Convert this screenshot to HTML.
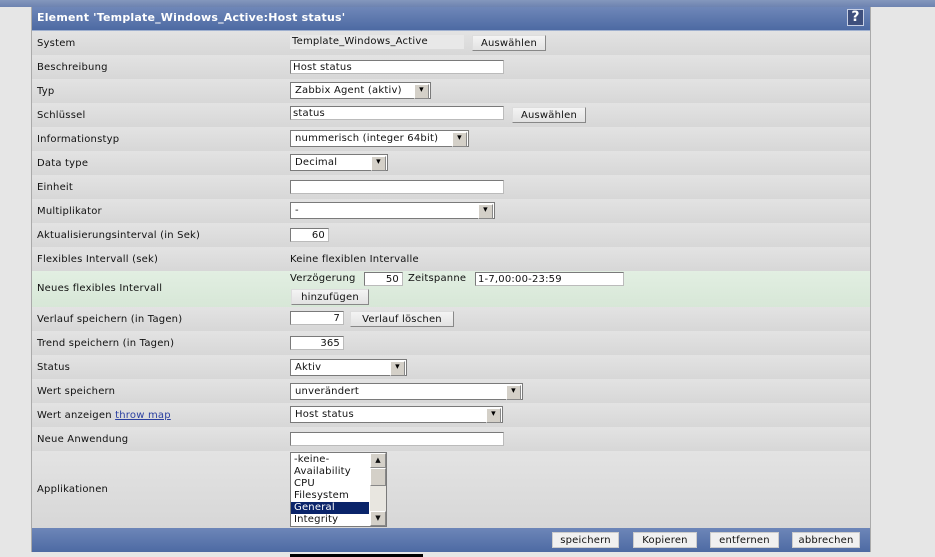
<!DOCTYPE html>
<html><head><meta charset="utf-8"><style>
*{box-sizing:border-box;margin:0;padding:0}
body{width:935px;height:557px;background:#e6e6e6;font-family:"DejaVu Sans","Liberation Sans",sans-serif;font-size:10px;color:#111;position:relative;overflow:hidden;letter-spacing:0.2px}
.top{position:absolute;left:0;top:0;width:935px;height:7px;background:linear-gradient(#8497bd,#6d83b0)}
.wrap{position:absolute;left:31px;top:7px;width:840px;height:545px;border-left:1px solid #aaa;border-right:1px solid #aaa}
.hdr{position:absolute;left:32px;top:7px;width:838px;height:24px;background:linear-gradient(#6f87b8,#4d6aa3);color:#fff;font-weight:bold;font-size:11px;line-height:22px;padding-left:5px;border-bottom:1px solid #9fb0cf}
.help{position:absolute;right:6px;top:2px;width:17px;height:17px;background:#3e4f7d;border:1px solid #c8d0e4;color:#fff;font-size:14px;line-height:15px;text-align:center}
.row{position:absolute;left:32px;width:838px;height:24px;background:linear-gradient(#e3e3e3,#d7d7d7)}
.row .l{position:absolute;left:5px;top:7px;white-space:nowrap}
.g{background:linear-gradient(#e2efe2,#d7e7d7)}
.in{position:absolute;height:14px;background:#fff;border:1px solid #7a7a7a;border-right-color:#bbb;border-bottom-color:#bbb;line-height:13px;padding-left:2px;white-space:nowrap;overflow:hidden}
.r{text-align:right;padding-right:3px}
.sel{position:absolute;height:17px;background:#fff;border:1px solid #7a7a7a;line-height:16px;padding-left:4px;white-space:nowrap}
.sel:after{content:"▾";position:absolute;right:1px;top:1px;width:13px;height:13px;background:#d4d0c8;border:1px solid #888;border-top-color:#fff;border-left-color:#fff;font-size:9px;line-height:11px;text-align:center;color:#000}
.btn{position:absolute;height:16px;background:linear-gradient(#f4f4f4,#e2e2e2);border:1px solid #888;border-top-color:#ddd;border-left-color:#ddd;text-align:center;line-height:15px;white-space:nowrap}
.ft{position:absolute;left:32px;top:528px;width:838px;height:24px;background:linear-gradient(#6d86b8,#4d6aa3)}
.fb{position:absolute;top:4px;height:16px;background:#f0f0f0;border:1px solid #ccc;text-align:center;line-height:15px}
a{color:#2a3fa0;text-decoration:underline}
</style></head><body>
<div class="top"></div>
<div class="wrap"></div>
<div class="hdr">Element 'Template_Windows_Active:Host status'<div class="help">?</div></div>

<div class="row" style="top:31px"><span class="l">System</span>
<div class="in" style="left:258px;top:4px;width:174px;background:#e8e8e8;border:none">Template_Windows_Active</div>
<div class="btn" style="left:440px;top:4px;width:74px">Auswählen</div></div>
<div class="row" style="top:55px"><span class="l">Beschreibung</span><div class="in" style="left:258px;top:5px;width:214px">Host status</div></div>
<div class="row" style="top:79px"><span class="l">Typ</span><div class="sel" style="left:258px;top:3px;width:141px">Zabbix Agent (aktiv)</div></div>
<div class="row" style="top:103px"><span class="l">Schlüssel</span><div class="in" style="left:258px;top:3px;width:214px">status</div><div class="btn" style="left:480px;top:4px;width:74px">Auswählen</div></div>
<div class="row" style="top:127px"><span class="l">Informationstyp</span><div class="sel" style="left:258px;top:3px;width:179px">nummerisch (integer 64bit)</div></div>
<div class="row" style="top:151px"><span class="l">Data type</span><div class="sel" style="left:258px;top:3px;width:98px">Decimal</div></div>
<div class="row" style="top:175px"><span class="l">Einheit</span><div class="in" style="left:258px;top:5px;width:214px"></div></div>
<div class="row" style="top:199px"><span class="l">Multiplikator</span><div class="sel" style="left:258px;top:3px;width:205px">-</div></div>
<div class="row" style="top:223px"><span class="l">Aktualisierungsinterval (in Sek)</span><div class="in r" style="left:258px;top:5px;width:39px">60</div></div>
<div class="row" style="top:247px"><span class="l">Flexibles Intervall (sek)</span><span class="l" style="left:258px">Keine flexiblen Intervalle</span></div>
<div class="row g" style="top:271px;height:36px"><span class="l" style="top:12px">Neues flexibles Intervall</span>
<span class="l" style="left:258px;top:2px">Verzögerung</span><div class="in r" style="left:332px;top:1px;width:39px">50</div>
<span class="l" style="left:376px;top:2px">Zeitspanne</span><div class="in" style="left:443px;top:1px;width:149px">1-7,00:00-23:59</div>
<div class="btn" style="left:259px;top:18px;width:78px">hinzufügen</div></div>
<div class="row" style="top:307px"><span class="l">Verlauf speichern (in Tagen)</span><div class="in r" style="left:258px;top:4px;width:54px">7</div><div class="btn" style="left:318px;top:4px;width:104px">Verlauf löschen</div></div>
<div class="row" style="top:331px"><span class="l">Trend speichern (in Tagen)</span><div class="in r" style="left:258px;top:5px;width:54px">365</div></div>
<div class="row" style="top:355px"><span class="l">Status</span><div class="sel" style="left:258px;top:4px;width:117px">Aktiv</div></div>
<div class="row" style="top:379px"><span class="l">Wert speichern</span><div class="sel" style="left:258px;top:4px;width:233px">unverändert</div></div>
<div class="row" style="top:403px"><span class="l">Wert anzeigen <a>throw map</a></span><div class="sel" style="left:258px;top:3px;width:213px">Host status</div></div>
<div class="row" style="top:427px"><span class="l">Neue Anwendung</span><div class="in" style="left:258px;top:5px;width:214px"></div></div>
<div class="row" style="top:451px;height:77px"><span class="l" style="top:33px">Applikationen</span>
<div style="position:absolute;left:258px;top:1px;width:97px;height:75px;background:#fff;border:1px solid #7a7a7a;line-height:12px;padding-top:1px">
<div style="padding-left:3px">-keine-</div><div style="padding-left:3px">Availability</div><div style="padding-left:3px">CPU</div><div style="padding-left:3px">Filesystem</div><div style="padding-left:3px;background:#0a246a;color:#fff;width:78px">General</div><div style="padding-left:3px">Integrity</div>
<div style="position:absolute;right:0;top:0;width:16px;height:73px;background:#e8e6e0">
<div style="height:15px;background:#d4d0c8;border:1px solid #888;border-top-color:#fff;border-left-color:#fff;font-size:7px;text-align:center;line-height:13px">▲</div>
<div style="height:18px;background:#d4d0c8;border:1px solid #888;border-top-color:#fff;border-left-color:#fff"></div>
<div style="position:absolute;bottom:0;width:16px;height:15px;background:#d4d0c8;border:1px solid #888;border-top-color:#fff;border-left-color:#fff;font-size:7px;text-align:center;line-height:13px">▼</div></div></div></div>
<div class="ft">
<div class="fb" style="left:520px;width:67px">speichern</div>
<div class="fb" style="left:601px;width:64px">Kopieren</div>
<div class="fb" style="left:678px;width:69px">entfernen</div>
<div class="fb" style="left:760px;width:68px">abbrechen</div></div>
<div style="position:absolute;left:290px;top:554px;width:133px;height:3px;background:#000"></div>
</body></html>
